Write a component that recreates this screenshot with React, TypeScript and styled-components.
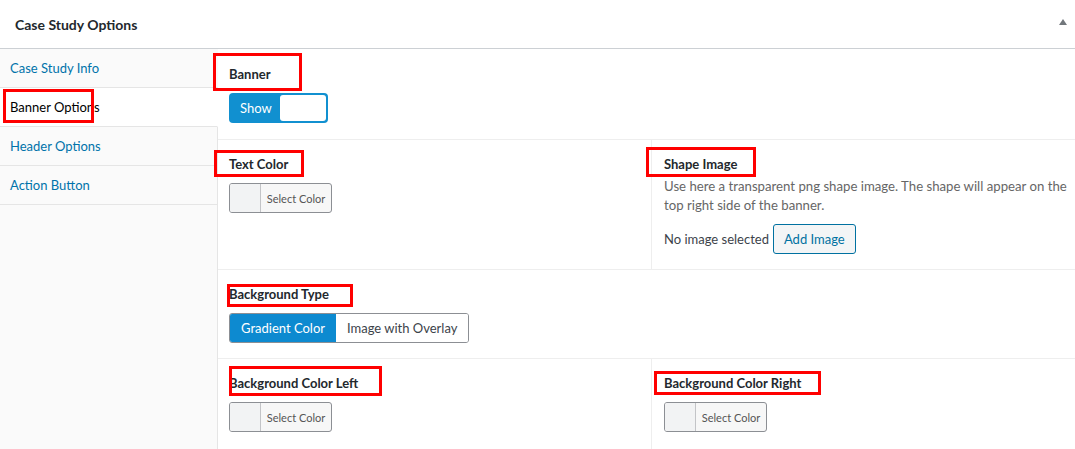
import styled, { createGlobalStyle } from "styled-components";

const GlobalStyle = createGlobalStyle`
  html, body {
    margin: 0;
    padding: 0;
    background: #fff;
  }
  body {
    font-family: Lato, "Noto Sans", sans-serif;
    font-size: 13px;
    color: #23282d;
  }
`;

const tabs = ["Case Study Info", "Banner Options", "Header Options", "Action Button"];

export default function App() {
  return (
    <>
      <GlobalStyle />
      <Box>
        <Header>
          <Title>Case Study Options</Title>
          <Toggle />
        </Header>
        <Body>
          <Sidebar>
            {tabs.map((t) => (
              <Tab key={t} $active={t === "Banner Options"}>
                <Tag>
                  {t}
                  {t === "Banner Options" && <Mark $t={-10} $l={-7} $w={91} $h={34} />}
                </Tag>
              </Tab>
            ))}
            <SidebarFill />
          </Sidebar>
          <Content>
            <Section $pt={15} $pb={16}>
              <Field>
                <Label>
                  Banner
                  <Mark $t={-11} $l={-16} $w={89} $h={38} />
                </Label>
                <Switch>
                  <SwitchText>Show</SwitchText>
                  <Knob />
                </Switch>
              </Field>
            </Section>
            <Section $pt={14} $pb={15}>
              <Column>
                <Label>
                  Text Color
                  <Mark $t={-4} $l={-15} $w={90} $h={27} />
                </Label>
                <ColorButton>
                  <Swatch />
                  <ColorText>Select Color</ColorText>
                </ColorButton>
              </Column>
              <Column $right>
                <Label>
                  Shape Image
                  <Mark $t={-7} $l={-18} $w={110} $h={30} />
                </Label>
                <Desc>
                  Use here a transparent png shape image. The shape will appear on the top right side of the banner.
                </Desc>
                <ImageRow>
                  <span>No image selected</span>
                  <AddButton>Add Image</AddButton>
                </ImageRow>
              </Column>
            </Section>
            <Section $pt={14} $pb={15}>
              <Field>
                <Label>
                  Background Type
                  <Mark $t={0} $l={-2} $w={126} $h={23} />
                </Label>
                <Group>
                  <GroupButton $active>Gradient Color</GroupButton>
                  <GroupButton>Image with Overlay</GroupButton>
                </Group>
              </Field>
            </Section>
            <Section $pt={14} $pb={16} $last>
              <Column>
                <Label>
                  Background Color Left
                  <Mark $t={-7} $l={0} $w={153} $h={30} />
                </Label>
                <ColorButton>
                  <Swatch />
                  <ColorText>Select Color</ColorText>
                </ColorButton>
              </Column>
              <Column $right>
                <Label>
                  Background Color Right
                  <Mark $t={-2} $l={-10} $w={167} $h={24} />
                </Label>
                <ColorButton>
                  <Swatch />
                  <ColorText>Select Color</ColorText>
                </ColorButton>
              </Column>
            </Section>
          </Content>
        </Body>
      </Box>
    </>
  );
}

const Box = styled.div`
  width: 1075px;
  height: 449px;
  overflow: hidden;
  display: flex;
  flex-direction: column;
`;

const Header = styled.div`
  height: 48px;
  flex: none;
  border-bottom: 1px solid #ccd0d4;
  display: flex;
  align-items: center;
  justify-content: space-between;
  padding: 0 8px 0 15px;
`;

const Title = styled.h2`
  margin: 0;
  font-size: 14px;
  font-weight: 700;
  color: #23282d;
`;

const Toggle = styled.span`
  width: 0;
  height: 0;
  border-left: 4px solid transparent;
  border-right: 4px solid transparent;
  border-bottom: 6px solid #72777c;
  margin-bottom: 4px;
`;

const Body = styled.div`
  flex: 1;
  display: flex;
  min-height: 0;
`;

const Sidebar = styled.div`
  width: 218px;
  flex: none;
  display: flex;
  flex-direction: column;
`;

const Tab = styled.div<{ $active?: boolean }>`
  height: 38px;
  flex: none;
  display: flex;
  align-items: center;
  padding-left: 10px;
  border-bottom: 1px solid #e5e5e5;
  border-right: 1px solid ${(p) => (p.$active ? "#fff" : "#fafafa")};
  background: ${(p) => (p.$active ? "#fff" : "#fafafa")};
  color: ${(p) => (p.$active ? "#000" : "#0073aa")};
  &:first-child {
    border-right-color: #fafafa;
  }
  &:nth-child(n + 3) {
    border-right-color: #e5e5e5;
  }
`;

const SidebarFill = styled.div`
  flex: 1;
  background: #fafafa;
  border-right: 1px solid #e5e5e5;
`;

const Tag = styled.span`
  position: relative;
`;

const Mark = styled.span<{ $t: number; $l: number; $w: number; $h: number }>`
  position: absolute;
  top: ${(p) => p.$t}px;
  left: ${(p) => p.$l}px;
  width: ${(p) => p.$w}px;
  height: ${(p) => p.$h}px;
  border: 3px solid #f00;
  box-sizing: border-box;
  pointer-events: none;
`;

const Content = styled.div`
  flex: 1;
  display: flex;
  flex-direction: column;
`;

const Section = styled.div<{ $pt: number; $pb: number; $last?: boolean }>`
  display: flex;
  border-bottom: ${(p) => (p.$last ? "none" : "1px solid #eee")};
  flex: ${(p) => (p.$last ? 1 : "none")};
  & > * {
    padding-top: ${(p) => p.$pt}px;
    padding-bottom: ${(p) => p.$pb}px;
  }
`;

const Field = styled.div`
  padding-left: 11px;
  display: flex;
  flex-direction: column;
  align-items: flex-start;
`;

const Column = styled.div<{ $right?: boolean }>`
  width: ${(p) => (p.$right ? "auto" : "434px")};
  flex: ${(p) => (p.$right ? 1 : "none")};
  box-sizing: border-box;
  padding-left: ${(p) => (p.$right ? "12px" : "11px")};
  padding-right: 4px;
  border-right: ${(p) => (p.$right ? "none" : "1px solid #eee")};
  display: flex;
  flex-direction: column;
  align-items: flex-start;
`;

const Label = styled.span`
  position: relative;
  font-weight: 700;
  line-height: 20px;
  margin-bottom: 9px;
  color: #23282d;
`;

const Switch = styled.div`
  width: 99px;
  height: 30px;
  box-sizing: border-box;
  border-radius: 4px;
  background: #1190d0;
  display: flex;
  align-items: center;
  justify-content: space-between;
  padding: 2px;
`;

const SwitchText = styled.span`
  color: #fff;
  padding-left: 9px;
`;

const Knob = styled.span`
  width: 46px;
  height: 26px;
  background: #fff;
  border-radius: 3px;
`;

const ColorButton = styled.div`
  width: 103px;
  height: 30px;
  box-sizing: border-box;
  border: 1px solid #8c8f94;
  border-radius: 3px;
  background: #f7f7f7;
  display: flex;
  overflow: hidden;
`;

const Swatch = styled.span`
  width: 30px;
  background: #f2f3f4;
  border-right: 1px solid #c3c4c7;
`;

const ColorText = styled.span`
  flex: 1;
  display: flex;
  align-items: center;
  justify-content: center;
  font-size: 11px;
  color: #555;
`;

const Desc = styled.p`
  margin: -6px 0 9px;
  line-height: 19px;
  color: #666;
  font-size: 13.2px;
`;

const ImageRow = styled.div`
  display: flex;
  align-items: center;
  gap: 4px;
  color: #3c434a;
`;

const AddButton = styled.span`
  height: 30px;
  box-sizing: border-box;
  padding: 0 10px;
  display: flex;
  align-items: center;
  border: 1px solid #0071a1;
  border-radius: 3px;
  background: #f3f5f6;
  color: #0071a1;
`;

const Group = styled.div`
  display: flex;
  height: 30px;
  border: 1px solid #8c8f94;
  border-radius: 3px;
  overflow: hidden;
  box-sizing: border-box;
`;

const GroupButton = styled.span<{ $active?: boolean }>`
  display: flex;
  align-items: center;
  padding: 0 11px;
  background: ${(p) => (p.$active ? "#0d8ad0" : "#fff")};
  color: ${(p) => (p.$active ? "#fff" : "#3c434a")};
`;
